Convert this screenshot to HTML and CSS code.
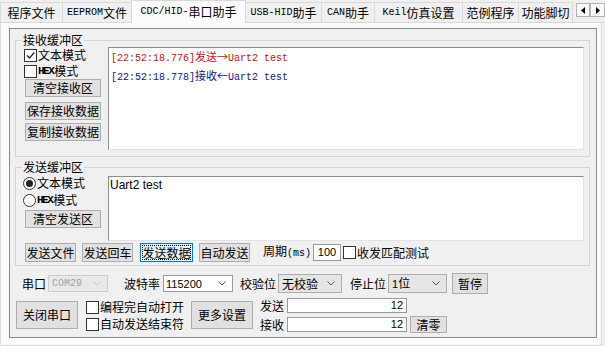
FILE: index.html
```html
<!DOCTYPE html>
<html lang="zh">
<head>
<meta charset="utf-8">
<title>CDC/HID-串口助手</title>
<link rel="stylesheet" href="styles.css">
</head>
<body>
<div class="tabs">
  <div class="tab w1">程序文件</div>
  <div class="tab w2"><span class="lat">EEPROM</span>文件</div>
  <div class="tab active w3"><span class="lat">CDC/HID-</span>串口助手</div>
  <div class="tab w4"><span class="lat">USB-HID</span>助手</div>
  <div class="tab w5"><span class="lat">CAN</span>助手</div>
  <div class="tab w6"><span class="lat">Keil</span>仿真设置</div>
  <div class="tab w7">范例程序</div>
  <div class="tab w8">功能脚切</div>
  <div class="scrollbtns">
    <span class="sbtn"><svg width="4" height="7" viewBox="0 0 4 7"><path d="M4 0 L0 3.5 L4 7Z" fill="#000"/></svg></span>
    <span class="sbtn"><svg width="4" height="7" viewBox="0 0 4 7"><path d="M0 0 L4 3.5 L0 7Z" fill="#000"/></svg></span>
  </div>
</div>
<div class="page">
  <div class="frame">
    <fieldset class="group recv">
      <legend>接收缓冲区</legend>
      <div class="grouprow">
        <div class="leftcol">
          <div class="check r1"><span class="box"><svg width="11" height="11" viewBox="0 0 11 11"><path d="M2 5.5 L4.5 8 L9.2 2.5" fill="none" stroke="#222" stroke-width="1.2"/></svg></span>文本模式</div>
          <div class="check r2"><span class="box"></span><span class="hex">HEX</span>模式</div>
          <button class="btn side b1">清空接收区</button>
          <button class="btn side b2">保存接收数据</button>
          <button class="btn side b3">复制接收数据</button>
        </div>
        <div class="textarea recvarea">
          <div class="line tx">[22:52:18.776]<span class="cn">发送→</span>Uart2 test</div>
          <div class="line rx">[22:52:18.778]<span class="cn">接收←</span>Uart2 test</div>
        </div>
      </div>
    </fieldset>
    <fieldset class="group send">
      <legend>发送缓冲区</legend>
      <div class="grouprow">
        <div class="leftcol">
          <div class="check s1"><span class="radio on"></span>文本模式</div>
          <div class="check s2"><span class="radio"></span><span class="hex">HEX</span>模式</div>
          <button class="btn side s3">清空发送区</button>
        </div>
        <div class="textarea sendarea">Uart2 test</div>
      </div>
      <div class="btnrow">
        <button class="btn sb1">发送文件</button>
        <button class="btn sb2">发送回车</button>
        <button class="btn sb3 focus"><span>发送数据</span></button>
        <button class="btn sb4">自动发送</button>
        <span class="period">周期<span class="lat">(ms)</span></span>
        <div class="field small">100</div>
        <span class="box small-box"></span>
        <span class="lbl">收发匹配测试</span>
      </div>
    </fieldset>
    <div class="bottom">
      <div class="row1">
        <span class="lbl l1">串口</span>
        <div class="combo disabled c1"><span class="lat">COM29</span><svg width="8" height="5" viewBox="0 0 8 5"><path d="M0.5 0.5 L4 4 L7.5 0.5" fill="none" stroke="#c4c4c4"/></svg></div>
        <span class="lbl l2">波特率</span>
        <div class="combo edit c2"><span class="num">115200</span><svg width="8" height="5" viewBox="0 0 8 5"><path d="M0.5 0.5 L4 4 L7.5 0.5" fill="none" stroke="#555"/></svg></div>
        <span class="lbl l3">校验位</span>
        <div class="combo list c3"><span>无校验</span><svg width="8" height="5" viewBox="0 0 8 5"><path d="M0.5 0.5 L4 4 L7.5 0.5" fill="none" stroke="#555"/></svg></div>
        <span class="lbl l4">停止位</span>
        <div class="combo list c4"><span><span class="num">1</span>位</span><svg width="8" height="5" viewBox="0 0 8 5"><path d="M0.5 0.5 L4 4 L7.5 0.5" fill="none" stroke="#555"/></svg></div>
        <button class="btn pause">暂停</button>
      </div>
      <div class="row2">
        <button class="btn big close">关闭串口</button>
        <div class="checks">
          <div class="check"><span class="box"></span>编程完自动打开</div>
          <div class="check"><span class="box"></span>自动发送结束符</div>
        </div>
        <button class="btn big more">更多设置</button>
        <div class="counters">
          <div class="crow"><span class="lbl">发送</span><div class="field count">12</div></div>
          <div class="crow"><span class="lbl">接收</span><div class="field count">12</div><button class="btn clear">清零</button></div>
        </div>
      </div>
    </div>
  </div>
</div>
</body>
</html>
```
FILE: styles.css
```css
* { box-sizing: border-box; }
html, body { margin: 0; padding: 0; }
body {
  width: 605px;
  height: 346px;
  overflow: hidden;
  background: #f0f0f0;
  font: 12px/14px "Noto Sans CJK SC", "Liberation Sans", sans-serif;
  color: #000;
}
.lat { font-family: "Liberation Mono", monospace; font-size: 10px; }
.hex {
  font-family: "Liberation Mono", monospace;
  font-size: 11px;
  font-weight: bold;
  letter-spacing: -1.5px;
  margin-right: 1px;
}
.num { font-family: "Liberation Sans", sans-serif; font-size: 11px; }

/* tabs */
.tabs {
  display: flex;
  align-items: flex-end;
  height: 23px;
  border-bottom: 1px solid #d9d9d9;
}
.tab {
  flex: none;
  height: 20px;
  margin-right: -1px;
  border: 1px solid #d9d9d9;
  border-bottom: none;
  background: #f0f0f0;
  display: flex;
  align-items: center;
  justify-content: center;
  white-space: nowrap;
}
.tab.active { height: 23px; margin-bottom: -1px; background: #fcfcfc; }
.w1 { width: 63px; }
.w2 { width: 70px; }
.w3 { width: 115px; }
.w4 { width: 77px; }
.w5 { width: 54px; }
.w6 { width: 89px; }
.w7 { width: 57px; }
.w8 { width: 55px; }
.scrollbtns { align-self: flex-start; margin: 3px 0 0 4px; display: flex; }
.sbtn {
  width: 14px; height: 14px;
  border: 1px solid #b4b4b4;
  background: #fafafa;
  display: flex; align-items: center; justify-content: center;
}
.sbtn + .sbtn { width: 15px; }

/* page */
.page {
  width: 602px;
  height: 323px;
  border: 1px solid #d9d9d9;
  border-top: none;
  background: #fcfcfc;
  padding: 5px 4px 0 8px;
}
.frame {
  width: 588px;
  height: 310px;
  border: 1px solid #8a8a8a;
  background: #f0f0f0;
  padding-top: 4px;
}

/* group boxes */
.group {
  margin: 0 6px 0 5px;
  border: 1px solid #d5d5d5;
  padding: 0 5px 6px 8px;
  min-width: 0;
}
.group legend { padding: 0 1px; margin-left: -2px; line-height: 14px; }
.group.send { margin-top: 3px; padding-bottom: 3px; }
.grouprow { display: flex; }
.leftcol { width: 84px; flex: none; display: flex; flex-direction: column; align-items: flex-start; }

.check { display: flex; align-items: center; height: 14px; white-space: nowrap; }
.box {
  flex: none;
  width: 13px; height: 13px;
  border: 1px solid #333;
  background: #fff;
  margin-right: 1px;
  display: flex; align-items: center; justify-content: center;
}
.radio {
  flex: none;
  width: 13px; height: 13px;
  border: 1px solid #333;
  border-radius: 50%;
  background: #fff;
  margin-right: 1px;
  display: flex; align-items: center; justify-content: center;
}
.radio.on::after {
  content: "";
  width: 7px; height: 7px;
  border-radius: 50%;
  background: #222;
}
.r1 { margin-top: 1px; }
.r2 { margin-top: 2px; }
.s1 { margin-top: 2px; margin-left: -1px; }
.s2 { margin-top: 3px; margin-left: -1px; }

.btn {
  font: inherit;
  color: #000;
  padding: 0;
  margin: 0;
  border: 1px solid #adadad;
  background: #e1e1e1;
  line-height: 14px;
  white-space: nowrap;
}
.btn.side { width: 76px; height: 18px; margin-left: 1px; }
.b1 { margin-top: 1px; }
.b2 { margin-top: 5px; }
.b3 { margin-top: 3px; }
.s3 { margin-top: 3px; }

.textarea {
  flex: 1;
  background: #fff;
  border: 1px solid;
  border-color: #8c8c8c #e3e3e3 #e3e3e3 #8c8c8c;
}
.recvarea {
  height: 103px;
  padding: 0 2px;
  font-family: "Liberation Mono", monospace;
  font-size: 10px;
  line-height: 16px;
}
.line .cn { font-family: "Noto Sans CJK SC", sans-serif; font-size: 11px; }
.tx { color: #cc1010; }
.rx { color: #14148c; }
.sendarea {
  height: 65px;
  margin-top: 2px;
  padding: 1px 1px;
  font-family: "Liberation Sans", sans-serif;
  font-size: 12px;
  line-height: 15px;
}

.btnrow { display: flex; align-items: center; height: 19px; margin-top: 2px; }
.btnrow .btn { height: 19px; }
.sb1 { width: 51px; margin-left: 1px; }
.sb2 { width: 51px; margin-left: 6px; }
.sb3 { width: 53px; margin-left: 7px; }
.sb4 { width: 51px; margin-left: 6px; }
.btn.focus {
  border-color: #0078d7;
  background: #e5f1fb;
  outline: 1px dotted #000;
  outline-offset: -3px;
}
.period { margin-left: 13px; white-space: nowrap; }
.field {
  background: #fff;
  border: 1px solid #9a9a9a;
  font-family: "Liberation Sans", sans-serif;
  font-size: 11px;
  line-height: 13px;
  text-align: right;
}
.field.small { width: 28px; height: 17px; margin-left: 2px; text-align: center; line-height: 15px; }
.small-box { margin-left: 2px; width: 13px; height: 13px; }
.lbl { white-space: nowrap; }

/* bottom controls */
.bottom { padding-left: 6px; }
.row1 { display: flex; align-items: center; height: 21px; margin-top: 7px; }
.l1 { margin-left: 6px; }
.l2 { margin-left: 16px; }
.l3 { margin-left: 7px; }
.l4 { margin-left: 8px; }
.combo {
  display: flex;
  align-items: center;
  justify-content: space-between;
  padding: 0 6px 0 3px;
  height: 17px;
  border: 1px solid #adadad;
  white-space: nowrap;
}
.combo.disabled { background: #e9e9e9; border-color: #cccccc; color: #a0a0a0; }
.combo.edit { background: #fff; border-color: #9a9a9a; padding-left: 2px; }
.combo.list { background: #e5e5e5; height: 19px; }
.c1 { width: 60px; margin-left: 2px; }
.c2 { width: 70px; margin-left: 3px; }
.c3 { width: 64px; margin-left: 2px; }
.c4 { width: 59px; margin-left: 2px; }
.btn.pause { width: 36px; height: 21px; margin-left: 5px; }

.row2 { display: flex; align-items: flex-start; margin-top: 4px; }
.btn.big { width: 62px; height: 28px; margin-top: 3px; }
.checks { width: 105px; margin-left: 8px; margin-top: 2px; display: flex; flex-direction: column; gap: 3px; }
.counters { margin-left: 7px; display: flex; flex-direction: column; gap: 3px; }
.crow { display: flex; align-items: center; }
.field.count { width: 120px; height: 15px; margin-left: 3px; padding-right: 3px; }
.btn.clear { width: 37px; height: 17px; margin-left: 3px; }
```
